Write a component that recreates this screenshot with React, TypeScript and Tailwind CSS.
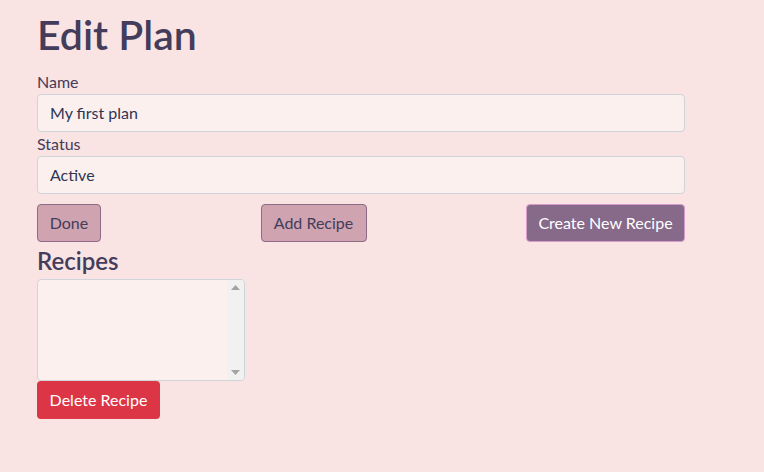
import React from "react";

export default function App() {
  const font = { fontFamily: "Lato, 'Noto Sans', sans-serif" };
  return (
    <div className="min-h-[472px] w-full bg-[#f9e3e3] text-[#433c5a]" style={font}>
      <div className="ml-[37px] w-[648px] pt-[11px]">
        <h1 className="text-[41px] font-semibold leading-[48px] mb-[12px]">Edit Plan</h1>
        <label className="block text-[16px] leading-[24px] mt-[-1px]">Name</label>
        <div className="h-[38px] rounded-[4px] border border-[#ced4da] bg-[#fcf0ef] px-[12px] text-[16px] leading-[36px] text-[#2f3553]">
          My first plan
        </div>
        <label className="block text-[16px] leading-[24px]">Status</label>
        <div className="h-[38px] rounded-[4px] border border-[#ced4da] bg-[#fcf0ef] px-[12px] text-[16px] leading-[36px] text-[#2f3553]">
          Active
        </div>
        <div className="mt-[10px] flex justify-between">
          <button className="h-[38px] w-[64px] rounded-[4px] border border-[#8d6a86] bg-[#cfa3b0] text-[16px] text-[#433c5a]">
            Done
          </button>
          <button className="h-[38px] w-[106px] rounded-[4px] border border-[#8d6a86] bg-[#cfa3b0] text-[16px] text-[#433c5a]">
            Add Recipe
          </button>
          <button className="h-[38px] w-[159px] rounded-[4px] border border-[#d79ccd] bg-[#876a8a] text-[16px] text-white">
            Create New Recipe
          </button>
        </div>
        <h3 className="mt-[1px] text-[24px] font-semibold leading-[36px] text-[#433c5a]">Recipes</h3>
        <div className="flex h-[102px] w-[208px] overflow-hidden rounded-[4px] border border-[#ced4da] bg-[#fcf0ef]">
          <div className="flex-1" />
          <div className="flex w-[17px] flex-col items-center justify-between bg-[#f1f1f1] py-[5px]">
            <svg width="9" height="5" viewBox="0 0 9 5"><path d="M0 5 L4.5 0 L9 5 Z" fill="#a3a3a3" /></svg>
            <svg width="9" height="5" viewBox="0 0 9 5"><path d="M0 0 L4.5 5 L9 0 Z" fill="#a3a3a3" /></svg>
          </div>
        </div>
        <button className="h-[38px] w-[123px] rounded-[4px] bg-[#dc3545] text-[16px] text-white">
          Delete Recipe
        </button>
      </div>
    </div>
  );
}
